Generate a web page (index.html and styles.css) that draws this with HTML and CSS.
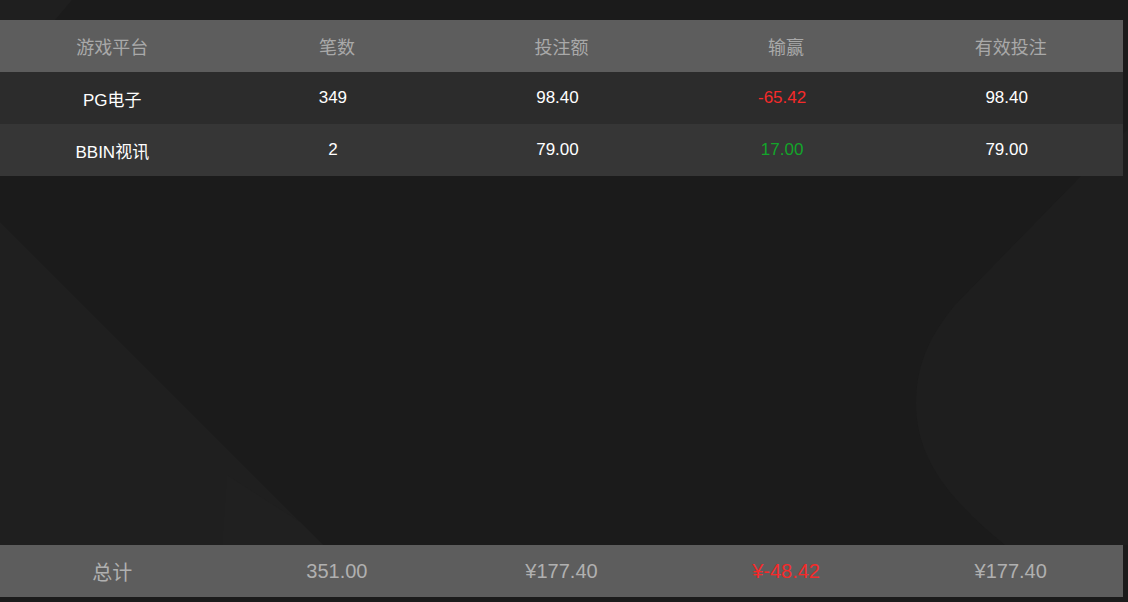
FILE: index.html
```html
<!DOCTYPE html>
<html lang="zh-CN">
<head>
    <meta charset="UTF-8">
    <meta name="viewport" content="width=device-width, initial-scale=1.0">
    <title>游戏报表</title>
    <link rel="stylesheet" href="styles.css">
</head>
<body>
    <svg class="bg-shapes" viewBox="0 0 1128 602" preserveAspectRatio="none" aria-hidden="true">
        <polygon points="0,0 72,0 55,20 0,20" fill="#1f1f1f"/>
        <polygon points="0,222 323,545 0,545" fill="#1f1f1f"/>
        <polygon points="227,475 300,522 323,545 222,545" fill="#202020"/>
        <path d="M1128,129 L1080,177 L955,305 C926,340 916,370 916,403 C916,460 950,500 1005,545 L1128,545 Z" fill="#1e1e1e"/>
    </svg>
    <div class="page">
        <table class="report">
            <thead>
                <tr>
                    <th>游戏平台</th>
                    <th>笔数</th>
                    <th>投注额</th>
                    <th>输赢</th>
                    <th>有效投注</th>
                </tr>
            </thead>
            <tbody>
                <tr class="row-odd">
                    <td>PG电子</td>
                    <td>349</td>
                    <td>98.40</td>
                    <td class="lose">-65.42</td>
                    <td>98.40</td>
                </tr>
                <tr class="row-even">
                    <td>BBIN视讯</td>
                    <td>2</td>
                    <td>79.00</td>
                    <td class="win">17.00</td>
                    <td>79.00</td>
                </tr>
            </tbody>
        </table>
        <div class="spacer"></div>
        <table class="report total">
            <tr>
                <td>总计</td>
                <td>351.00</td>
                <td>¥177.40</td>
                <td class="lose">¥-48.42</td>
                <td>¥177.40</td>
            </tr>
        </table>
    </div>
</body>
</html>
```

FILE: styles.css
```css
html, body {
    margin: 0;
    padding: 0;
    height: 100%;
}
body {
    font-family: "Liberation Sans", Arial, "Noto Sans CJK SC", sans-serif;
    background-color: #1b1b1b;
    position: relative;
    overflow: hidden;
}
.bg-shapes {
    position: absolute;
    top: 0;
    left: 0;
    width: 100%;
    height: 100%;
    z-index: 0;
}
.page {
    position: relative;
    z-index: 1;
    height: 100%;
    box-sizing: border-box;
    padding: 20px 0 5px;
    display: flex;
    flex-direction: column;
}
.spacer {
    flex: 1;
}
.report {
    width: 1123px;
    border-collapse: collapse;
    table-layout: fixed;
}
.report th,
.report td {
    height: 52px;
    padding: 0;
    text-align: center;
    vertical-align: middle;
}
.report th {
    background-color: #5d5d5d;
    color: #a9a9a9;
    font-weight: normal;
    font-size: 18px;
}
.report td {
    color: #fff;
    font-size: 17px;
}
.row-odd td + td,
.row-even td + td {
    padding-right: 8px;
}
.row-odd td {
    background-color: #2c2c2c;
}
.row-even td {
    background-color: #363636;
}
.report .lose {
    color: #f52a2a;
}
.report .win {
    color: #13a52a;
}
.total td {
    background-color: #5d5d5d;
    color: #b0b0b0;
    font-size: 20px;
}
.total td.lose {
    color: #f52a2a;
}
```
